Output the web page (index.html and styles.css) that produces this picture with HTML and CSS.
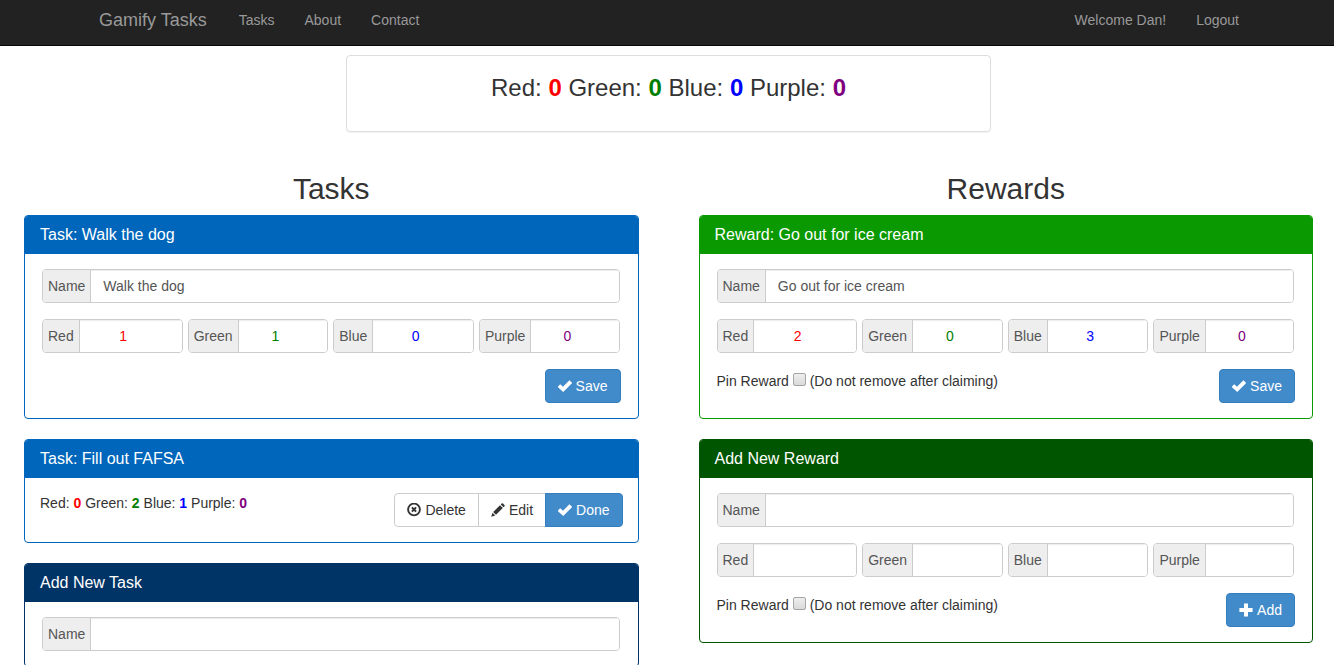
FILE: index.html
```html
<!DOCTYPE html>
<html lang="en">
<head>
<meta charset="utf-8">
<title>Gamify Tasks</title>
<link rel="stylesheet" href="styles.css">
</head>
<body>
<svg class="sprite" aria-hidden="true">
  <symbol id="ok" viewBox="0 0 14 14"><path d="M-.4 7.800 2.200 5.200 5 7.800 11.400 1.300 14.200 4 5.200 13Z"/></symbol>
  <symbol id="plus" viewBox="0 0 14 14"><path d="M5 .6h4v4.400h4.600v4H9v4.400H5V9H.4V5H5Z"/></symbol>
  <symbol id="remove" viewBox="0 0 14 14"><circle cx="7" cy="6.500" r="5.900" fill="none" stroke="currentColor" stroke-width="1.900"/><path d="m4.900 4.400 4.200 4.200m0-4.200-4.200 4.200" stroke="currentColor" stroke-width="2"/></symbol>
  <symbol id="pencil" viewBox="0 0 14 14"><path d="M.2 13.800 1.500 9.800 4.200 12.500ZM2.200 9 9 2.200l2.800 2.800L5 11.800ZM9.800 1.400 10.600.600q.7-.6 1.400 0L13.400 2q.6.700 0 1.400l-.8.800Z"/></symbol>
</svg>
<nav class="navbar">
  <div class="navbar-inner">
    <a class="brand" href="#">Gamify Tasks</a>
    <a class="nav-link" href="#">Tasks</a>
    <a class="nav-link" href="#">About</a>
    <a class="nav-link" href="#">Contact</a>
    <a class="nav-link nav-right" href="#">Welcome Dan!</a>
    <a class="nav-link" href="#">Logout</a>
  </div>
</nav>
<main class="page">
  <div class="well">Red: <b class="red">0</b> Green: <b class="green">0</b> Blue: <b class="blue">0</b> Purple: <b class="purple">0</b></div>
  <div class="columns">
    <section class="column">
      <h2>Tasks</h2>
      <article class="panel task">
        <h3>Task: Walk the dog</h3>
        <form class="panel-body">
          <div class="fields">
            <label class="field"><span>Name</span><input type="text" value="Walk the dog"></label>
            <div class="points">
              <label class="field"><span>Red</span><input class="red" type="number" value="1"></label>
              <label class="field"><span>Green</span><input class="green" type="number" value="1"></label>
              <label class="field"><span>Blue</span><input class="blue" type="number" value="0"></label>
              <label class="field"><span>Purple</span><input class="purple" type="number" value="0"></label>
            </div>
          </div>
          <div class="actions"><button class="btn primary" type="button"><svg><use href="#ok"/></svg>Save</button></div>
        </form>
      </article>
      <article class="panel task">
        <h3>Task: Fill out FAFSA</h3>
        <div class="panel-body summary">
          <p>Red: <b class="red">0</b> Green: <b class="green">2</b> Blue: <b class="blue">1</b> Purple: <b class="purple">0</b></p>
          <div class="btn-group">
            <button class="btn" type="button"><svg><use href="#remove"/></svg>Delete</button>
            <button class="btn" type="button"><svg><use href="#pencil"/></svg>Edit</button>
            <button class="btn primary" type="button"><svg><use href="#ok"/></svg>Done</button>
          </div>
        </div>
      </article>
      <article class="panel new-task">
        <h3>Add New Task</h3>
        <form class="panel-body">
          <div class="fields">
            <label class="field"><span>Name</span><input type="text"></label>
          </div>
        </form>
      </article>
    </section>
    <section class="column">
      <h2>Rewards</h2>
      <article class="panel reward">
        <h3>Reward: Go out for ice cream</h3>
        <form class="panel-body">
          <div class="fields">
            <label class="field"><span>Name</span><input type="text" value="Go out for ice cream"></label>
            <div class="points">
              <label class="field"><span>Red</span><input class="red" type="number" value="2"></label>
              <label class="field"><span>Green</span><input class="green" type="number" value="0"></label>
              <label class="field"><span>Blue</span><input class="blue" type="number" value="3"></label>
              <label class="field"><span>Purple</span><input class="purple" type="number" value="0"></label>
            </div>
          </div>
          <div class="actions">
            <label class="pin">Pin Reward <input type="checkbox"> (Do not remove after claiming)</label>
            <button class="btn primary" type="button"><svg><use href="#ok"/></svg>Save</button>
          </div>
        </form>
      </article>
      <article class="panel new-reward">
        <h3>Add New Reward</h3>
        <form class="panel-body">
          <div class="fields">
            <label class="field"><span>Name</span><input type="text"></label>
            <div class="points">
              <label class="field"><span>Red</span><input class="red" type="number"></label>
              <label class="field"><span>Green</span><input class="green" type="number"></label>
              <label class="field"><span>Blue</span><input class="blue" type="number"></label>
              <label class="field"><span>Purple</span><input class="purple" type="number"></label>
            </div>
          </div>
          <div class="actions">
            <label class="pin">Pin Reward <input type="checkbox"> (Do not remove after claiming)</label>
            <button class="btn primary" type="button"><svg><use href="#plus"/></svg>Add</button>
          </div>
        </form>
      </article>
    </section>
  </div>
</main>
</body>
</html>
```
FILE: styles.css
```css
* { box-sizing: border-box; }
html { scrollbar-width: none; }
body {
  margin: 0;
  font: 14px/20px "Liberation Sans", Arial, sans-serif;
  color: #333;
  background: #fff;
}
h2, h3, p { margin: 0; font-weight: 400; }
.sprite { display: none; }
.red { color: #f00; }
.green { color: #008000; }
.blue { color: #00f; }
.purple { color: #800080; }

.navbar {
  padding: 0 0 0 4px;
  background: #222;
  border-bottom: 1px solid #080808;
}
.navbar-inner {
  display: flex;
  max-width: 1170px;
  margin: 0 auto;
}
.navbar a {
  padding: 10px 15px 15px;
  color: #999;
  text-decoration: none;
}
.navbar .brand {
  padding-right: 17px;
  font-size: 18px;
}
.navbar .nav-right { margin-left: auto; }

.page { padding: 9px 21px 20px 24px; }
.well {
  width: 50%;
  max-width: 645px;
  margin: 0 auto 40px;
  padding: 19px 10px 30px;
  border: 1px solid #ddd;
  border-radius: 4px;
  box-shadow: 0 1px 1px rgba(0, 0, 0, .05);
  font-size: 24px;
  line-height: 26px;
  text-align: center;
}
.columns {
  display: grid;
  grid-template-columns: 1fr 1fr;
  gap: 60px;
}
.column h2 {
  margin-bottom: 10px;
  font-size: 30px;
  line-height: 33px;
  text-align: center;
}

.panel {
  margin-bottom: 20px;
  border: 1px solid;
  border-radius: 4px;
  overflow: hidden;
}
.panel h3 {
  padding: 10px 15px;
  color: #fff;
  font-size: 16px;
  line-height: 18px;
}
.task { border-color: #06b; }
.task h3 { background: #06b; }
.new-task { border-color: #036; }
.new-task h3 { background: #036; }
.reward { border-color: #0a9900; }
.reward h3 { background: #0a9900; }
.new-reward { border-color: #050; }
.new-reward h3 { background: #050; }
.panel-body { padding: 15px; }

.fields {
  display: grid;
  gap: 16px;
  padding: 0 3px 0 2px;
}
.points {
  display: grid;
  grid-template-columns: repeat(4, minmax(0, 1fr));
  gap: 5px;
}
.field {
  display: flex;
  height: 34px;
  border: 1px solid #ccc;
  border-radius: 4px;
  overflow: hidden;
}
.field span {
  padding: 6px 5px;
  color: #555;
  background: #eee;
  border-right: 1px solid #ccc;
}
.field input {
  flex: 1;
  min-width: 0;
  padding: 6px 12px;
  border: 0;
  outline: 0;
  background: #fff;
  box-shadow: inset 0 1px 1px rgba(0, 0, 0, .075);
  font: inherit;
}
.field input[type="text"] { color: #555; }
.field input[type="number"] { text-align: center; }

.actions {
  display: flex;
  align-items: flex-start;
  margin: 16px 2px 0;
}
.actions .btn { margin-left: auto; }
.pin { padding-top: 2px; }
.pin input {
  width: 13px;
  height: 13px;
  margin: 0;
  appearance: none;
  border: 1px solid #a5a5a5;
  border-radius: 2px;
  background: linear-gradient(#eee, #d9d9d9);
}

.btn {
  display: flex;
  align-items: center;
  gap: 4px;
  height: 34px;
  padding: 0 12px;
  border: 1px solid #ccc;
  border-radius: 4px;
  background: #fff;
  color: #333;
  font: inherit;
}
.btn svg {
  width: 14px;
  height: 14px;
  overflow: visible;
  fill: currentColor;
}
.btn.primary {
  background: #428bca;
  border-color: #357ebd;
  color: #fff;
}
.summary {
  display: flex;
  justify-content: space-between;
}
.btn-group { display: flex; }
.btn-group .btn + .btn {
  margin-left: -1px;
  border-top-left-radius: 0;
  border-bottom-left-radius: 0;
}
.btn-group .btn:not(:last-child) {
  border-top-right-radius: 0;
  border-bottom-right-radius: 0;
}
```
